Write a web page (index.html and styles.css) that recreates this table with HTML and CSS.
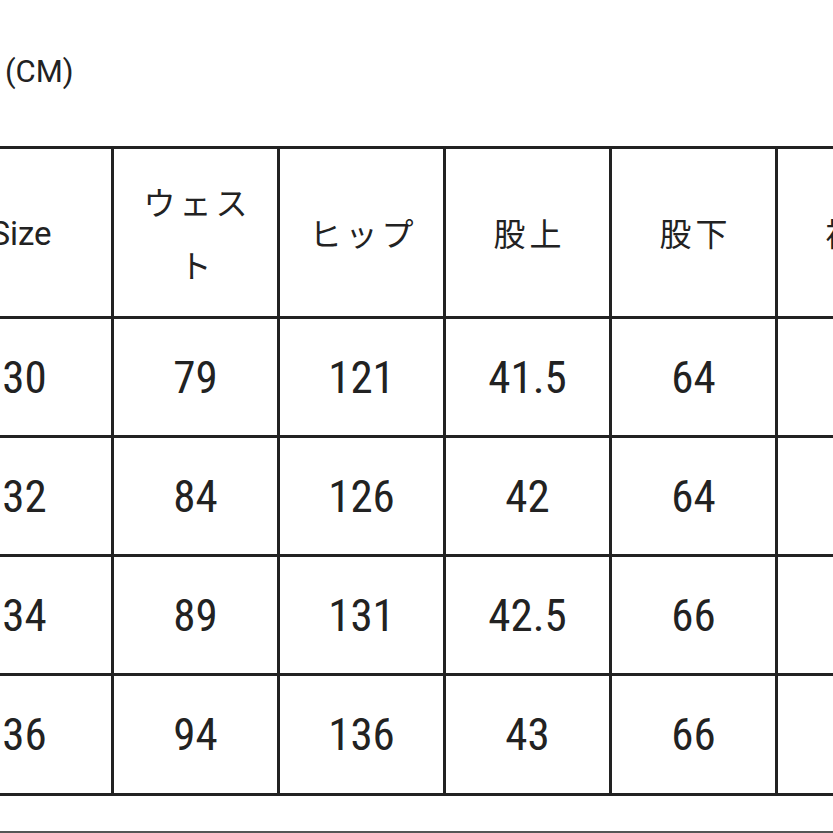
FILE: index.html
```html
<!DOCTYPE html>
<html lang="ja">
<head>
<meta charset="utf-8">
<link rel="stylesheet" href="styles.css">
</head>
<body>
<div class="page">
  <div class="unit">(CM)</div>
  <div class="grid">
    <div class="cell head first size"><span class="en">Size</span></div>
    <div class="cell head"><span class="ja">ウェスト</span></div>
    <div class="cell head"><span class="ja">ヒップ</span></div>
    <div class="cell head"><span class="ja">股上</span></div>
    <div class="cell head"><span class="ja">股下</span></div>
    <div class="cell head"><span class="ja">裾幅</span></div>
    <div class="cell head"><span class="ja">総丈</span></div>

    <div class="cell first"><span class="num">30</span></div>
    <div class="cell"><span class="num">79</span></div>
    <div class="cell"><span class="num">121</span></div>
    <div class="cell"><span class="num">41.5</span></div>
    <div class="cell"><span class="num">64</span></div>
    <div class="cell"><span class="num">22</span></div>
    <div class="cell"><span class="num">103</span></div>

    <div class="cell first"><span class="num">32</span></div>
    <div class="cell"><span class="num">84</span></div>
    <div class="cell"><span class="num">126</span></div>
    <div class="cell"><span class="num">42</span></div>
    <div class="cell"><span class="num">64</span></div>
    <div class="cell"><span class="num">23</span></div>
    <div class="cell"><span class="num">104</span></div>

    <div class="cell first"><span class="num">34</span></div>
    <div class="cell"><span class="num">89</span></div>
    <div class="cell"><span class="num">131</span></div>
    <div class="cell"><span class="num">42.5</span></div>
    <div class="cell"><span class="num">66</span></div>
    <div class="cell"><span class="num">24</span></div>
    <div class="cell"><span class="num">107</span></div>

    <div class="cell first"><span class="num">36</span></div>
    <div class="cell"><span class="num">94</span></div>
    <div class="cell"><span class="num">136</span></div>
    <div class="cell"><span class="num">43</span></div>
    <div class="cell"><span class="num">66</span></div>
    <div class="cell"><span class="num">25</span></div>
    <div class="cell"><span class="num">108</span></div>
  </div>
  <div class="rule"></div>
</div>
</body>
</html>
```
FILE: styles.css
```css
html, body {
  margin: 0;
  padding: 0;
  background: #ffffff;
}
body {
  width: 833px;
  height: 833px;
  overflow: hidden;
  color: #222222;
  font-family: Roboto, "Noto Sans CJK JP", sans-serif;
}
.page {
  display: flex;
  flex-direction: column;
  padding-top: 56px;
}
.unit {
  font-family: Roboto, sans-serif;
  font-size: 31px;
  line-height: 31px;
  height: 31px;
  padding-left: 5px;
  color: #222;
}
.grid {
  margin-top: 59px;
  margin-left: -55px;
  display: grid;
  grid-template-columns: repeat(7, 166px);
  grid-template-rows: 170px 119px 119px 119px 120px;
  width: max-content;
  border-top: 3px solid #222;
  border-left: 3px solid #222;
}
.cell {
  box-sizing: border-box;
  border-right: 3px solid #222;
  border-bottom: 3px solid #222;
  display: flex;
  align-items: center;
  justify-content: center;
  text-align: center;
  padding: 0 12px;
}
.first {
  padding-right: 22px;
}
.size {
  padding-right: 29px;
}
.num {
  font-family: Roboto, sans-serif;
  font-stretch: 75%;
  font-size: 45px;
  line-height: 1;
}
.en {
  font-family: Roboto, sans-serif;
  font-size: 33px;
  line-height: 1;
  padding-top: 2px;
}
.ja {
  font-family: "Noto Sans CJK JP", sans-serif;
  font-size: 32px;
  font-weight: 400;
  letter-spacing: 4px;
  padding-left: 4px;
  line-height: 63px;
}
.rule {
  margin-top: 35px;
  height: 2px;
  background: #555;
}
```
